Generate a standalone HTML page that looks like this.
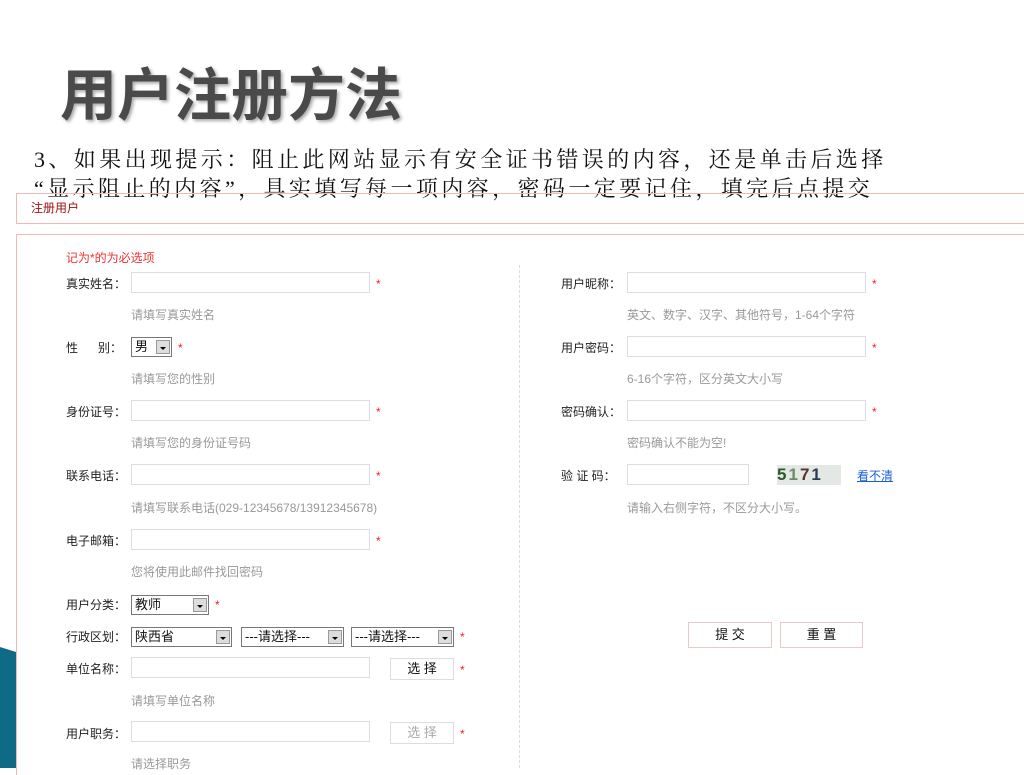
<!DOCTYPE html>
<html><head><meta charset="utf-8"><style>
body{margin:0;width:1024px;height:768px;overflow:hidden;background:#fff;position:relative;font-family:"Liberation Sans","Noto Sans CJK SC",sans-serif;}
.a{position:absolute;white-space:nowrap}
.t{left:60px;top:50px;font-size:57px;font-weight:bold;color:#4a4a4a;text-shadow:2px 2px 3px #aaa;letter-spacing:0px}
.p{font-family:"Liberation Serif","Noto Serif CJK SC",serif;font-size:22px;color:#111;left:34px;letter-spacing:3.4px}
.lb{font-size:12px;color:#222;}
.in{position:absolute;height:21px;border:1px solid #ddd;background:#fff;box-sizing:border-box}
.h{font-size:12px;color:#999}
.s{font-size:12px;color:#e22}
.sel{position:absolute;height:20px;border:1px solid #777;box-sizing:border-box;font-size:13px;line-height:18px;padding-left:3px;background:#fff;color:#111}
.sel:after{content:"";position:absolute;right:1px;top:2px;width:14px;height:14px;background:#ddd;border:1px solid #999;box-sizing:border-box}
.sel i{position:absolute;right:5px;top:9px;border:3px solid transparent;border-top:3px solid #000;z-index:2}
.bt{position:absolute;border:1px solid #e8c8c8;background:#fff;font-size:13px;text-align:center;color:#111;box-sizing:border-box}
</style></head><body>
<div class="a t">用户注册方法</div>
<div class="a p" style="top:143px">3、如果出现提示：阻止此网站显示有安全证书错误的内容，还是单击后选择</div>
<div class="a p" style="top:172px">“显示阻止的内容”，具实填写每一项内容，密码一定要记住，填完后点提交</div>
<div class="a" style="left:16px;top:193px;width:1008px;height:29px;border-top:1px solid #f0b8b8;border-bottom:1px solid #f0b8b8;border-left:1px solid #f0b8b8"></div>
<div class="a" style="left:31px;top:199px;font-size:12px;color:#a01010">注册用户</div>
<div class="a" style="left:16px;top:234px;width:1008px;height:540px;border-top:1px solid #f0b8b8;border-left:1px solid #f0b8b8"></div>
<div class="a" style="left:519px;top:265px;height:503px;border-left:1px dashed #ddd"></div>
<div class="a" style="left:0;top:647px;width:16px;height:121px;background:#0e6a85;clip-path:polygon(0 0,100% 5px,100% 100%,0 100%)"></div>
<div class="a s" style="left:66px;top:249px;color:#e33">记为*的为必选项</div>

<div class="a lb" style="left:66px;top:275px">真实姓名：</div><div class="in" style="left:131px;top:272px;width:239px"></div><div class="a s" style="left:376px;top:277px">*</div>
<div class="a h" style="left:131px;top:306px">请填写真实姓名</div>
<div class="a lb" style="left:66px;top:339px">性&nbsp;&nbsp;&nbsp;&nbsp;&nbsp;&nbsp;别：</div><div class="sel" style="left:131px;top:337px;width:41px">男<i></i></div><div class="a s" style="left:178px;top:341px">*</div>
<div class="a h" style="left:131px;top:370px">请填写您的性别</div>
<div class="a lb" style="left:66px;top:403px">身份证号：</div><div class="in" style="left:131px;top:400px;width:239px"></div><div class="a s" style="left:376px;top:405px">*</div>
<div class="a h" style="left:131px;top:434px">请填写您的身份证号码</div>
<div class="a lb" style="left:66px;top:467px">联系电话：</div><div class="in" style="left:131px;top:464px;width:239px"></div><div class="a s" style="left:376px;top:469px">*</div>
<div class="a h" style="left:131px;top:499px">请填写联系电话(029-12345678/13912345678)</div>
<div class="a lb" style="left:66px;top:532px">电子邮箱：</div><div class="in" style="left:131px;top:529px;width:239px"></div><div class="a s" style="left:376px;top:534px">*</div>
<div class="a h" style="left:131px;top:563px">您将使用此邮件找回密码</div>
<div class="a lb" style="left:66px;top:596px">用户分类：</div><div class="sel" style="left:131px;top:595px;width:78px">教师<i></i></div><div class="a s" style="left:215px;top:598px">*</div>
<div class="a lb" style="left:66px;top:628px">行政区划：</div><div class="sel" style="left:131px;top:627px;width:101px">陕西省<i></i></div><div class="sel" style="left:241px;top:627px;width:103px">---请选择---<i></i></div><div class="sel" style="left:351px;top:627px;width:103px">---请选择---<i></i></div><div class="a s" style="left:460px;top:630px">*</div>
<div class="a lb" style="left:66px;top:660px">单位名称：</div><div class="in" style="left:131px;top:657px;width:239px"></div><div class="bt" style="left:390px;top:658px;width:64px;height:22px;line-height:20px;border-color:#ddd">选 择</div><div class="a s" style="left:460px;top:663px">*</div>
<div class="a h" style="left:131px;top:692px">请填写单位名称</div>
<div class="a lb" style="left:66px;top:725px">用户职务：</div><div class="in" style="left:131px;top:721px;width:239px"></div><div class="bt" style="left:390px;top:722px;width:64px;height:22px;line-height:20px;border-color:#ddd;color:#aaa">选 择</div><div class="a s" style="left:460px;top:727px">*</div>
<div class="a h" style="left:131px;top:755px">请选择职务</div>

<div class="a lb" style="left:561px;top:275px">用户昵称：</div><div class="in" style="left:627px;top:272px;width:239px"></div><div class="a s" style="left:872px;top:277px">*</div>
<div class="a h" style="left:627px;top:306px">英文、数字、汉字、其他符号，1-64个字符</div>
<div class="a lb" style="left:561px;top:339px">用户密码：</div><div class="in" style="left:627px;top:336px;width:239px"></div><div class="a s" style="left:872px;top:341px">*</div>
<div class="a h" style="left:627px;top:370px">6-16个字符，区分英文大小写</div>
<div class="a lb" style="left:561px;top:403px">密码确认：</div><div class="in" style="left:627px;top:400px;width:239px"></div><div class="a s" style="left:872px;top:405px">*</div>
<div class="a h" style="left:627px;top:434px">密码确认不能为空!</div>
<div class="a lb" style="left:561px;top:467px">验&nbsp;证&nbsp;码：</div><div class="in" style="left:627px;top:464px;width:122px"></div>
<div class="a" style="left:777px;top:465px;width:64px;height:20px;background:#e4e8e4;font-size:17px;font-weight:bold;line-height:20px;letter-spacing:2px"><span style="color:#2a5a2a">5</span><span style="color:#6a8a6a">1</span><span style="color:#5a3030">7</span><span style="color:#2a3a5a">1</span></div>
<div class="a" style="left:857px;top:467px;font-size:12px;color:#1a5fd0;text-decoration:underline">看不清</div>
<div class="a h" style="left:627px;top:499px">请输入右侧字符，不区分大小写。</div>
<div class="bt" style="left:688px;top:622px;width:84px;height:26px;line-height:24px">提 交</div>
<div class="bt" style="left:780px;top:622px;width:83px;height:26px;line-height:24px">重 置</div>
</body></html>
